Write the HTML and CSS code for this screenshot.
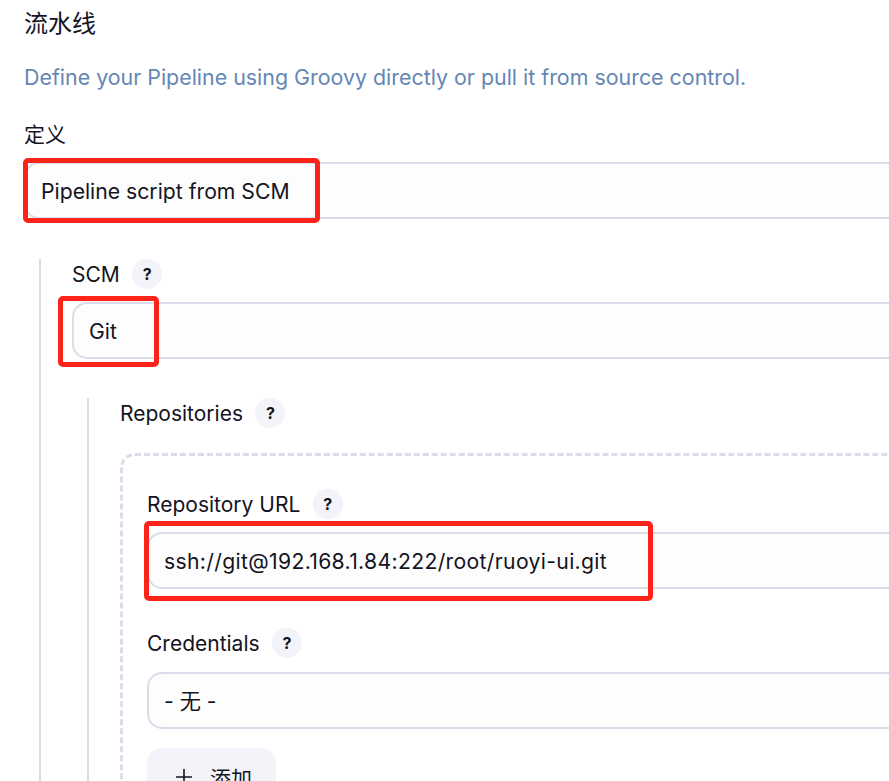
FILE: index.html
```html
<!DOCTYPE html>
<html lang="zh-CN">
<head>
  <meta charset="UTF-8">
  <meta name="viewport" content="width=device-width, initial-scale=1.0">
  <title>流水线</title>
  <link rel="stylesheet" href="styles.css">
</head>
<body>
  <div class="page">
    <h2 class="section-title">流水线</h2>
    <p class="section-desc">Define your Pipeline using Groovy directly or pull it from source control.</p>

    <div class="label-row definition-label"><span>定义</span></div>
    <div class="select">Pipeline script from SCM</div>

    <div class="nested scm-block">
      <div class="label-row"><span>SCM</span><span class="help">?</span></div>
      <div class="select">Git</div>

      <div class="nested repo-block">
        <div class="label-row"><span>Repositories</span><span class="help">?</span></div>

        <div class="repeat-box">
          <div class="label-row"><span>Repository URL</span><span class="help">?</span></div>
          <div class="select select-url">ssh://git@192.168.1.84:222/root/ruoyi-ui.git</div>

          <div class="label-row credentials-label"><span>Credentials</span><span class="help">?</span></div>
          <div class="select">- 无 -</div>

          <button class="add-btn">
            <svg class="add-icon" viewBox="0 0 20 20" aria-hidden="true"><path d="M10 2v16M2 10h16"/></svg>
            添加
          </button>
        </div>
      </div>
    </div>
  </div>

  <!-- red annotation boxes drawn on top of the screenshot -->
  <div class="mark mark-definition"></div>
  <div class="mark mark-scm"></div>
  <div class="mark mark-url"></div>
</body>
</html>
```

FILE: styles.css
```css
html, body {
  margin: 0;
  height: 781px;
  overflow: hidden;
}
body {
  position: relative;
  background-color: white;
  color: #14141f;
  font-family: Inter, "Noto Sans CJK SC", sans-serif;
  font-size: 21px;
}
.page {
  width: 1200px;
  padding: 0 0 0 24px;
}
.section-title {
  margin: 0;
  padding-top: 8px;
  font-size: 24px;
  font-weight: 400;
  line-height: 32px;
}
.section-desc {
  margin: 21px 0 0;
  color: #6487b4;
  font-size: 21.4px;
  line-height: 32px;
}
.label-row {
  display: flex;
  align-items: center;
  gap: 12.5px;
  height: 30px;
  margin-bottom: 13px;
}
.definition-label {
  margin-top: 25px;
  margin-bottom: 14px;
}
.select {
  height: 53px;
  padding-left: 15px;
  border: 2px solid #d9dde9;
  border-radius: 15px;
  background-color: #fdfdfd;
  font-size: 21.2px;
  line-height: 54px;
}
.select-url {
  letter-spacing: 0.32px;
}
.help {
  display: flex;
  align-items: center;
  justify-content: center;
  width: 30px;
  height: 30px;
  border-radius: 50%;
  background-color: #f3f4f9;
  font-size: 16px;
  font-weight: 700;
}
.nested {
  margin-left: 15px;
  padding-left: 31px;
  border-left: 2px solid #d9dde9;
}
.scm-block {
  margin-top: 40px;
}
.repo-block {
  margin-top: 39px;
}
.repeat-box {
  height: 600px;
  margin-top: 25px;
  padding: 33px 0 0 24px;
  border: 3px dashed #d9dde9;
  border-radius: 15px;
}
.credentials-label {
  margin-top: 39px;
  margin-bottom: 14px;
}
.add-btn {
  display: flex;
  align-items: center;
  gap: 16px;
  width: 129px;
  height: 58px;
  margin-top: 19px;
  padding: 0 0 0 27px;
  border: none;
  border-radius: 15px;
  background-color: #f3f4f9;
  color: #14141f;
  font: inherit;
}
.add-icon {
  width: 20px;
  height: 20px;
  fill: none;
  stroke: #14141f;
  stroke-width: 1.6;
}
.mark {
  position: absolute;
  box-sizing: border-box;
  border: 5px solid #fe2318;
  border-radius: 5px;
}
.mark-definition {
  left: 23px;
  top: 158px;
  width: 297px;
  height: 65px;
}
.mark-scm {
  left: 58px;
  top: 296px;
  width: 101px;
  height: 71px;
}
.mark-url {
  left: 144px;
  top: 521px;
  width: 509px;
  height: 80px;
}
```
